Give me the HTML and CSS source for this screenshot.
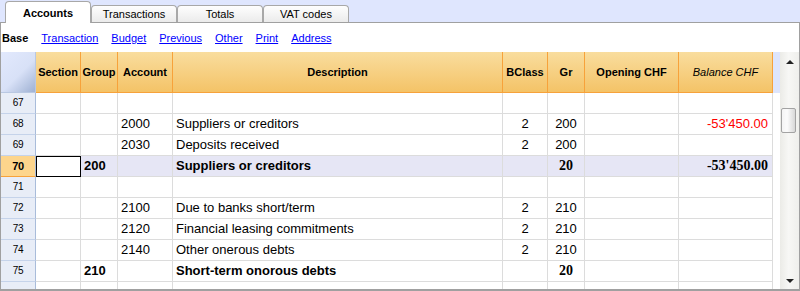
FILE: index.html
```html
<!DOCTYPE html>
<html lang="en">
<head>
  <meta charset="UTF-8">
  <title>Accounts</title>
  <link rel="stylesheet" href="styles.css">
</head>
<body>
  <div class="tabs">
    <div class="tab active">Accounts</div>
    <div class="tab">Transactions</div>
    <div class="tab">Totals</div>
    <div class="tab">VAT codes</div>
  </div>
  <div class="panel">
    <div class="views">
      <b>Base</b>
      <a href="#">Transaction</a>
      <a href="#">Budget</a>
      <a href="#">Previous</a>
      <a href="#">Other</a>
      <a href="#">Print</a>
      <a href="#">Address</a>
    </div>
    <div class="sheet">
      <div class="grid">
        <div class="row head">
          <div class="corner"></div>
          <div>Section</div>
          <div>Group</div>
          <div>Account</div>
          <div>Description</div>
          <div>BClass</div>
          <div>Gr</div>
          <div>Opening CHF</div>
          <div class="italic">Balance CHF</div>
        </div>
        <div class="row">
          <div class="num">67</div><div></div><div></div><div></div><div></div><div></div><div></div><div></div><div></div>
        </div>
        <div class="row">
          <div class="num">68</div><div></div><div></div><div>2000</div><div>Suppliers or creditors</div><div class="c">2</div><div class="c">200</div><div></div><div class="r neg">-53'450.00</div>
        </div>
        <div class="row">
          <div class="num">69</div><div></div><div></div><div>2030</div><div>Deposits received</div><div class="c">2</div><div class="c">200</div><div></div><div></div>
        </div>
        <div class="row total current">
          <div class="num">70</div><div class="selected"></div><div>200</div><div></div><div>Suppliers or creditors</div><div></div><div class="c fig">20</div><div></div><div class="r fig">-53'450.00</div>
        </div>
        <div class="row">
          <div class="num">71</div><div></div><div></div><div></div><div></div><div></div><div></div><div></div><div></div>
        </div>
        <div class="row">
          <div class="num">72</div><div></div><div></div><div>2100</div><div>Due to banks short/term</div><div class="c">2</div><div class="c">210</div><div></div><div></div>
        </div>
        <div class="row">
          <div class="num">73</div><div></div><div></div><div>2120</div><div>Financial leasing commitments</div><div class="c">2</div><div class="c">210</div><div></div><div></div>
        </div>
        <div class="row">
          <div class="num">74</div><div></div><div></div><div>2140</div><div>Other onerous debts</div><div class="c">2</div><div class="c">210</div><div></div><div></div>
        </div>
        <div class="row total">
          <div class="num">75</div><div></div><div>210</div><div></div><div>Short-term onorous debts</div><div></div><div class="c fig">20</div><div></div><div></div>
        </div>
        <div class="row cut">
          <div class="num"></div><div></div><div></div><div></div><div></div><div></div><div></div><div></div><div></div>
        </div>
      </div>
      <div class="gap"><div class="gap-head"></div></div>
      <div class="scrollbar">
        <div class="arrow up"></div>
        <div class="track">
          <div class="thumb"></div>
        </div>
        <div class="arrow down"></div>
      </div>
    </div>
  </div>
</body>
</html>
```

FILE: styles.css
```css
body {
  margin: 0;
  width: 800px;
  height: 291px;
  overflow: hidden;
  background: #fff;
  font-family: "Liberation Sans", Arial, sans-serif;
  color: #000;
}

/* tab strip */
.tabs {
  display: flex;
  align-items: flex-end;
  height: 22px;
  padding-left: 5px;
  background: #dfe6fe;
  border-bottom: 1px solid #a0a0a0;
}
.tab {
  width: 86px;
  height: 17px;
  box-sizing: border-box;
  border: 1px solid #a8a8a8;
  border-bottom: none;
  border-radius: 4px 4px 0 0;
  background: linear-gradient(#fefefe, #ebebeb);
  font-size: 11px;
  line-height: 17px;
  text-align: center;
}
.tab.active {
  height: 22px;
  margin-bottom: -1px;
  background: #fff;
  font-weight: bold;
  line-height: 22px;
}

/* panel */
.panel {
  height: 268px;
  box-sizing: border-box;
  border-left: 1px solid #a0a0a0;
  border-right: 1px solid #a0a0a0;
  border-bottom: 2px solid #a0a0a0;
}
.views {
  display: flex;
  align-items: center;
  gap: 13px;
  height: 29px;
  padding: 1px 0 0 1px;
  box-sizing: border-box;
  font-size: 11px;
}
.views a {
  color: #0000ff;
}

.sheet {
  display: flex;
  height: 237px;
}
.grid {
  width: 772px;
}
.row {
  display: grid;
  grid-template-columns: 35px 45px 37px 55px 330px 45px 37px 94px 94px;
  height: 21px;
  font-size: 13px;
}
.row > div {
  box-sizing: border-box;
  border-right: 1px solid #dcdcdc;
  border-bottom: 1px solid #dcdcdc;
  padding: 0 3px;
  line-height: 20px;
  white-space: nowrap;
  overflow: hidden;
}
.row.cut {
  height: 7px;
}
.row.cut > div {
  border-bottom: none;
}

.row.head {
  height: 41px;
  font-size: 11px;
  font-weight: bold;
}
.row.head > div {
  background: linear-gradient(#f9dd9e, #f4c367);
  border-right: 1px solid #f7a23a;
  border-bottom: 1px solid #f7a23a;
  line-height: 40px;
  text-align: center;
  padding: 0;
}
.row.head > .corner {
  background: linear-gradient(135deg, #e2e9fd 0%, #d8e1f7 55%, #9fb1d3 100%);
  border-right: 1px solid #b9c8e2;
  border-bottom: 1px solid #b9c8e2;
}
.row.head > .italic {
  font-style: italic;
  font-weight: normal;
}

.row > .num {
  background: #e8edf7;
  border-right: 1px solid #a9bcda;
  border-bottom: 1px solid #c5d3ea;
  text-align: center;
  font-size: 10px;
  font-weight: normal;
  letter-spacing: -0.3px;
  padding: 0;
}

.c {
  text-align: center;
}
.row > .r {
  text-align: right;
  padding-right: 4px;
}
.neg {
  color: #ff0000;
}

.total {
  font-weight: bold;
}
.fig {
  font-family: "Liberation Serif", "Times New Roman", serif;
  font-size: 14px;
}
.current > div {
  background: #e6e6f5;
}
.row.current > .num {
  background: #fdd58c;
  border-bottom-color: #f7a23a;
  font-size: 11px;
  font-weight: bold;
}
.row.current > .selected {
  background: #fff;
  outline: 1px solid #000;
  outline-offset: -1px;
  box-shadow: inset 0 1px 0 #000;
}

/* space between grid and scrollbar */
.gap {
  width: 7px;
}
.gap-head {
  height: 41px;
  background: #dde5fc;
}

/* scrollbar */
.scrollbar {
  width: 19px;
  display: flex;
  flex-direction: column;
  background: linear-gradient(90deg, #ebebe7, #f7f7f5 45%, #efefec);
}
.arrow {
  height: 18px;
  position: relative;
}
.arrow::after {
  content: "";
  position: absolute;
  left: 6px;
  border-left: 4px solid transparent;
  border-right: 4px solid transparent;
}
.arrow.up::after {
  top: 8px;
  border-bottom: 4px solid #222;
}
.arrow.down::after {
  top: 8px;
  border-top: 4px solid #222;
}
.track {
  flex: 1;
  padding-top: 38px;
}
.thumb {
  width: 15px;
  height: 25px;
  margin-left: 1px;
  box-sizing: border-box;
  border: 1px solid #a3a3a3;
  border-radius: 2px;
  background: linear-gradient(90deg, #f4f4f4, #fbfbfb 40%, #d7d7d7);
}
```
